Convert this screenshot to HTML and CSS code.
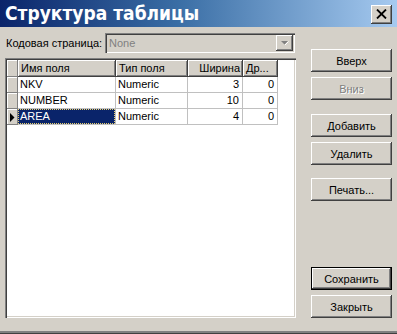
FILE: index.html
```html
<!DOCTYPE html>
<html>
<head>
<meta charset="utf-8">
<link rel="stylesheet" href="styles.css">
</head>
<body>
<div class="win">
  <div class="titlebar">
    <span class="title">Структура таблицы</span>
    <div class="close"><svg width="11" height="10" viewBox="0 0 11 10"><path d="M1 0.5 L10 9.5 M10 0.5 L1 9.5" stroke="#000" stroke-width="1.8" fill="none"/></svg></div>
  </div>
  <div class="body">
    <div class="left">
      <div class="cp-row">
        <span class="cp-label">Кодовая страница:</span>
        <div class="combo">
          <span class="combo-text">None</span>
          <div class="dd"><svg width="9" height="6" viewBox="0 0 9 6"><path d="M1 1 L8 1 L4.5 4.5 Z" fill="#808080"/><path d="M5 5 L8.5 1.5" stroke="#fff" stroke-width="1"/></svg></div>
        </div>
      </div>
      <div class="grid">
        <div class="row head">
          <div class="ind"></div>
          <div class="hc c1">Имя поля</div>
          <div class="hc c2">Тип поля</div>
          <div class="hc c3 num">Ширина</div>
          <div class="hc c4">Др...</div>
        </div>
        <div class="row">
          <div class="ind"></div>
          <div class="dc c1">NKV</div>
          <div class="dc c2">Numeric</div>
          <div class="dc c3 num">3</div>
          <div class="dc c4 num">0</div>
        </div>
        <div class="row">
          <div class="ind"></div>
          <div class="dc c1">NUMBER</div>
          <div class="dc c2">Numeric</div>
          <div class="dc c3 num">10</div>
          <div class="dc c4 num">0</div>
        </div>
        <div class="row">
          <div class="ind"><svg width="5" height="9" viewBox="0 0 5 9"><path d="M0 0 L4.5 4.5 L0 9 Z" fill="#000"/></svg></div>
          <div class="dc c1 sel"><span class="focus">AREA</span></div>
          <div class="dc c2">Numeric</div>
          <div class="dc c3 num">4</div>
          <div class="dc c4 num">0</div>
        </div>
      </div>
    </div>
    <div class="right">
      <div class="btn">Вверх</div>
      <div class="btn dis gap5">Вниз</div>
      <div class="btn gap14">Добавить</div>
      <div class="btn gap5">Удалить</div>
      <div class="btn gap13">Печать...</div>
      <div class="btn def auto">Сохранить</div>
      <div class="btn gap5">Закрыть</div>
    </div>
  </div>
</div>
</body>
</html>
```

FILE: styles.css
```css
* { box-sizing: border-box; }
html, body { margin: 0; padding: 0; }
body {
  width: 397px;
  height: 334px;
  overflow: hidden;
  font-family: "Liberation Sans", Arial, sans-serif;
  font-size: 11px;
  color: #000;
  background: #d4d0c8;
}
.win {
  width: 397px;
  height: 334px;
  background: #d4d0c8;
  display: flex;
  flex-direction: column;
  border-bottom: 1px solid #404040;
  box-shadow: inset 0 -2px 0 #808080;
}
.titlebar {
  height: 27px;
  background: linear-gradient(to right, #0a246a 0%, #3a6ea5 45%, #a6caf0 100%);
  display: flex;
  align-items: center;
  justify-content: space-between;
  padding: 0 5px 0 5px;
  flex-shrink: 0;
}
.title {
  color: #fff;
  font-family: "DejaVu Sans", Verdana, sans-serif;
  font-stretch: condensed;
  font-weight: bold;
  font-size: 19px;
  line-height: 27px;
}
.close {
  width: 21px;
  height: 19px;
  background: #d4d0c8;
  box-shadow: inset -1px -1px 0 #404040, inset 1px 1px 0 #fff, inset -2px -2px 0 #808080;
  display: flex;
  align-items: center;
  justify-content: center;
  margin-top: 1px;
}
.body {
  flex: 1;
  display: flex;
  padding: 6px 5px 15px 5px;
}
.left {
  width: 291px;
  display: flex;
  flex-direction: column;
}
.cp-row {
  display: flex;
  align-items: center;
  height: 20px;
}
.cp-label {
  padding-left: 1px;
  width: 100px;
}
.combo {
  width: 190px;
  height: 20px;
  box-shadow: inset 1px 1px 0 #808080, inset 2px 2px 0 #404040, inset -1px -1px 0 #fff, inset -2px -2px 0 #d4d0c8;
  display: flex;
  align-items: center;
  justify-content: space-between;
  padding: 2px 2px 2px 4px;
}
.combo-text { color: #808080; }
.dd {
  width: 17px;
  height: 16px;
  background: #d4d0c8;
  box-shadow: inset -1px -1px 0 #404040, inset 1px 1px 0 #fff, inset -2px -2px 0 #808080;
  display: flex;
  align-items: center;
  justify-content: center;
}
.grid {
  margin-top: 5px;
  flex: 1;
  background: #fff;
  box-shadow: inset 1px 1px 0 #808080, inset 2px 2px 0 #404040, inset -1px -1px 0 #fff, inset -2px -2px 0 #d4d0c8;
  padding: 2px;
}
.row {
  display: flex;
  height: 16px;
}
.row.head { height: 17px; }
.ind {
  width: 11px;
  background: #d4d0c8;
  box-shadow: inset -1px -1px 0 #808080, inset 1px 1px 0 #fff;
  display: flex;
  align-items: center;
  justify-content: center;
}
.c1 { width: 98px; }
.c2 { width: 72px; }
.c3 { width: 55px; }
.c4 { width: 35px; }
.hc {
  background: #d4d0c8;
  box-shadow: inset -1px -1px 0 #404040, inset 1px 1px 0 #fff, inset -2px -2px 0 #808080;
  padding: 0 3px;
  line-height: 17px;
  white-space: nowrap;
  overflow: hidden;
}
.dc {
  border-right: 1px solid #c0c0c0;
  border-bottom: 1px solid #c0c0c0;
  padding: 0 2px;
  line-height: 15px;
  white-space: nowrap;
}
.num { text-align: right; padding-right: 3px; }
.dc.sel {
  background: #0a246a;
  color: #fff;
  padding: 0;
}
.focus {
  display: block;
  height: 15px;
  border: 1px dotted #e8d070;
  padding-left: 1px;
  line-height: 13px;
}
.right {
  margin-left: 15px;
  width: 81px;
  display: flex;
  flex-direction: column;
  padding-top: 16px;
}
.btn {
  height: 23px;
  background: #d4d0c8;
  box-shadow: inset -1px -1px 0 #404040, inset 1px 1px 0 #fff, inset -2px -2px 0 #808080;
  display: flex;
  align-items: center;
  justify-content: center;
}
.btn.dis {
  color: #808080;
  text-shadow: 1px 1px 0 #fff;
}
.btn.def {
  border: 1px solid #000;
}
.gap5 { margin-top: 5px; }
.gap14 { margin-top: 14px; }
.gap13 { margin-top: 13px; }
.auto { margin-top: auto; }
```
